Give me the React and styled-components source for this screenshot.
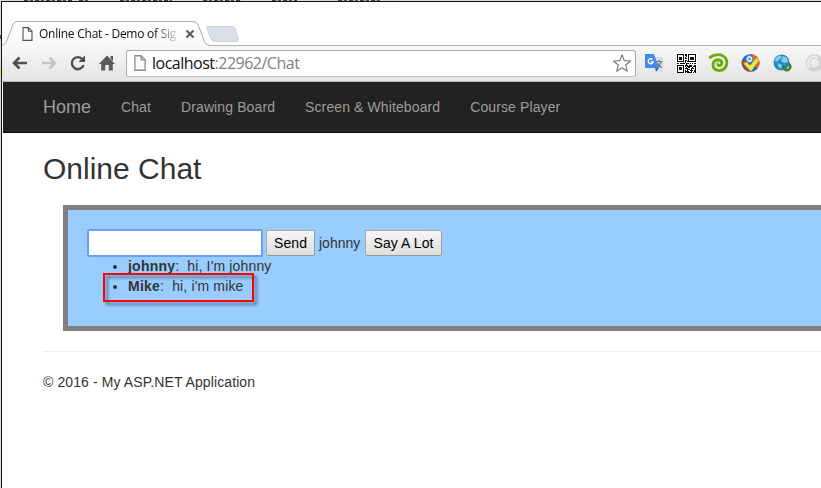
import React from "react";
import styled, { createGlobalStyle } from "styled-components";

const Global = createGlobalStyle`
  * { box-sizing: border-box; }
  html, body { margin: 0; overflow: hidden; background: #dcdddd; }
  body { font: 14px/20px "Liberation Sans", Arial, sans-serif; color: #333; }
`;

const dashes = "repeating-linear-gradient(90deg, #444 0 4px, #bbb 4px 6px, #555 6px 9px, #ddd 9px 11px)";

const Desktop = styled.div`
  width: 821px;
  height: 488px;
  padding: 1px 0 0 1px;
  overflow: hidden;
  background:
    ${dashes} 24px 0 / 48px 1px no-repeat,
    ${dashes} 79px 0 / 10px 1px no-repeat,
    ${dashes} 120px 0 / 52px 1px no-repeat,
    ${dashes} 203px 0 / 38px 1px no-repeat,
    ${dashes} 272px 0 / 25px 1px no-repeat,
    ${dashes} 338px 0 / 44px 1px no-repeat,
    linear-gradient(#e0cfcf, #e0cfcf) 316px 0 / 90px 1px no-repeat,
    linear-gradient(#555, #555) 0 35px / 1px 4px no-repeat,
    linear-gradient(#f0e600, #f0e600) 0 70px / 1px 4px no-repeat,
    #d9dcdc;
`;
const Window = styled.div`
  width: 840px;
  height: 487px;
  border: 1px solid #111;
  border-bottom: 0;
  background: #fff;
`;
const TabStrip = styled.div`
  position: relative;
  height: 44px;
  background: #fff;
`;
const TabShape = styled.svg`
  position: absolute;
  left: 0;
  top: 0;
`;
const TabContent = styled.div`
  position: absolute;
  left: 20px;
  top: 24px;
  display: flex;
  align-items: center;
  height: 16px;
`;
const TabTitle = styled.span`
  width: 139px;
  margin-left: 6px;
  margin-right: 5px;
  white-space: nowrap;
  font: 12px/16px "Open Sans", "Noto Sans", sans-serif;
  letter-spacing: -0.25px;
  color: #111;
  mask-image: linear-gradient(90deg, #000 115px, transparent 141px);
`;
const Toolbar = styled.div`
  display: flex;
  align-items: center;
  height: 36px;
  padding: 0 0 1px 9px;
  background: linear-gradient(#f7f7f7, #e4e4e4);
  border-bottom: 1px solid #b5b5b5;
`;
const NavIcons = styled.div`
  display: flex;
  gap: 11px;
  width: 115px;
  svg { display: block; flex: none; }
`;
const Omnibox = styled.div`
  display: flex;
  align-items: center;
  width: 510px;
  height: 27px;
  padding: 0 3px 0 7px;
  border: 1px solid #a9a9a9;
  border-bottom-color: #c4c4c4;
  border-radius: 3px;
  background: #fff;
`;
const Url = styled.span`
  flex: 1;
  margin-left: 6px;
  font: 16px/24px "Open Sans", "Noto Sans", sans-serif;
  letter-spacing: -0.5px;
  color: #808080;
  b { font-weight: 400; color: #111; }
`;
const Extensions = styled.div`
  display: flex;
  gap: 12px;
  margin-left: 8px;
  svg { display: block; flex: none; }
`;
const Page = styled.div`
  margin-left: 1px;
`;
const Navbar = styled.nav`
  display: flex;
  align-items: center;
  height: 51px;
  padding-left: 40px;
  background: #222;
  border-bottom: 1px solid #080808;
  color: #9d9d9d;
`;
const Brand = styled.a`
  width: 63px;
  font-size: 18px;
`;
const NavLink = styled.a`
  padding: 0 15px;
  letter-spacing: 0.11px;
`;
const Container = styled.main`
  padding-left: 40px;
`;
const Title = styled.h2`
  margin: 19px 0 20px;
  font: 30px/33px "Liberation Sans", Arial, sans-serif;
`;
const ChatBox = styled.section`
  margin: 0 0 20px 20px;
  height: 126px;
  padding: 20px;
  border: 5px solid #808080;
  background: #99ccff;
`;
const Form = styled.div`
  display: flex;
  align-items: center;
  gap: 4px;
  height: 26px;
`;
const MessageInput = styled.input`
  width: 174px;
  height: 26px;
  padding: 1px 2px;
  border: 1px solid #5b93ee;
  outline: 2px solid #699ff5;
  outline-offset: -1px;
  border-radius: 1px;
  background: #fff;
`;
const Button = styled.button`
  width: ${(p) => p.$width}px;
  height: 26px;
  padding: 0;
  border: 1px solid #a8a8a8;
  border-color: #a9a9a9 #999 #969696 #a9a9a9;
  border-radius: 2px;
  background: linear-gradient(#f6f6f6, #dedede);
  font: 14px/20px "Liberation Sans", Arial, sans-serif;
  letter-spacing: 0.1px;
  color: #000;
`;
const UserName = styled.span`
  width: 42px;
`;
const Messages = styled.ul`
  margin: 0;
  padding-left: 40px;
`;
const Message = styled.li`
  position: relative;
  white-space: pre;
  letter-spacing: 0.15px;
  strong { letter-spacing: 0.22px; }
`;
const Highlight = styled.span`
  position: absolute;
  left: -25px;
  top: -3px;
  width: 151px;
  height: 29px;
  border: 2px solid #f00;
  filter: drop-shadow(3px 3px 1.5px rgba(0, 0, 0, 0.45));
`;
const Footer = styled.footer`
  padding-top: 20px;
  border-top: 1px solid #eee;
  letter-spacing: 0.1px;
`;

const DocIcon = ({ w, h, color }) => (
  <svg width={w} height={h} viewBox="0 0 11 15">
    <path d="M.7 .7H6.500L10.300 4.500V14.300H.7ZM6.500 .7V4.500H10.300" fill="#fafafa" stroke={color} strokeWidth="1.200" />
  </svg>
);

const Arrow = ({ color, flip }) => (
  <svg width="18" height="18" viewBox="0 0 18 18">
    <path
      d="M16 9H3.500M8.500 3.500L3 9l5.500 5.500"
      fill="none"
      stroke={color}
      strokeWidth="2.600"
      transform={flip ? "translate(18 0) scale(-1 1)" : undefined}
    />
  </svg>
);

const QR = [
  "1111111011011111111",
  "1000001011010000001",
  "1000001001010000001",
  "1011101010010111101",
  "1011101011010111101",
  "1011101000010111101",
  "1000001011010000001",
  "1111111010111111111",
  "0000000010000000000",
  "1101111101110101011",
  "0000000001000000000",
  "1111111011101110011",
  "1000001010111110111",
  "1011101001011001001",
  "1011101011100011101",
  "1011101000111010001",
  "1000001010100111011",
  "1000001011110010011",
  "1111111010111110101",
];

export default function App() {
  return (
    <Desktop>
      <Global />
      <Window>
        <TabStrip>
          <TabShape width="819" height="44">
            <defs>
              <linearGradient id="tab" x1="0" y1="0" x2="0" y2="1">
                <stop offset="0" stopColor="#fff" />
                <stop offset="1" stopColor="#f7f7f7" />
              </linearGradient>
            </defs>
            <path d="M0 43.5H819" stroke="#b0b0b0" />
            <path d="M206 24.5h24q2.500 0 3.300 2l3 10.500q.7 2.500-2 2.500h-21q-3 0-4.300-2.500l-4-10q-.8-2.500 1-2.500z" fill="#d9dfe7" stroke="#ced3d9" />
            <path d="M-1 43.500Q3 43 4.500 39.500L11 22.500Q12.300 19.500 15 19.500H191Q194.500 19.500 196 22.500L202.500 39.500Q204 43.500 208 43.500V46H-1Z" fill="url(#tab)" stroke="#aaa" />
          </TabShape>
          <TabContent>
            <DocIcon w={11} h={14} color="#555" />
            <TabTitle>Online Chat - Demo of Sig</TabTitle>
            <svg width="14" height="14" viewBox="0 0 14 14">
              <path d="M3.500 3.500l7 7m0-7l-7 7" stroke="#555" strokeWidth="1.900" />
            </svg>
          </TabContent>
        </TabStrip>
        <Toolbar>
          <NavIcons>
            <Arrow color="#505050" />
            <Arrow color="#c4c4c4" flip />
            <svg width="18" height="18" viewBox="0 0 18 18">
              <path d="M13.500 5.300A6 6 0 1 0 14.600 11" fill="none" stroke="#505050" strokeWidth="2.400" />
              <path d="M16 1.500V8H9.500z" fill="#505050" />
            </svg>
            <svg width="18" height="18" viewBox="0 0 18 18">
              <path d="M9 1.500L17 10h-2.200v6.500h-4V11H7.200v5.500h-4V10H1zM12.500 2H15v5l-2.500-2.500z" fill="#5a5a5a" />
            </svg>
          </NavIcons>
          <Omnibox>
            <DocIcon w={12} h={16} color="#8a8a8a" />
            <Url><b>localhost</b>:22962/Chat</Url>
            <svg width="20" height="20" viewBox="0 0 20 20">
              <path d="M10 1.700l2.300 5.900 6.200.4-4.800 4 1.600 6.200L10 14.800l-5.300 3.400L6.300 12 1.500 8l6.200-.4z" fill="#fff" stroke="#777" strokeWidth="1.100" strokeLinejoin="round" />
            </svg>
          </Omnibox>
          <Extensions>
            <svg width="20" height="20" viewBox="0 0 20 20">
              <path d="M8 4h11v15h-6z" fill="#dcdcdc" />
              <path d="M1 1h9l5 14H2q-1 0-1-1z" fill="#4688f1" />
              <path d="M11 15h4l-3 4z" fill="#3b5fc0" />
              <path d="M8.500 6.500a2.500 2.500 0 1 0 .6 2.500H6.700" fill="none" stroke="#fff" strokeWidth="1.300" />
              <path d="M12.500 8.500H18M15 7v1.500M17 9q-1 4-3.500 5.500M13.500 10q1 3 4.500 4.500" fill="none" stroke="#607d8b" strokeWidth="1.200" />
            </svg>
            <svg width="21" height="20" viewBox="0 0 21 20" shapeRendering="crispEdges">
              <path fill="#fff" d="M0 0h21v20H0z" />
              {QR.map((row, y) => [...row].map((v, x) => v === "1" && <rect key={`${x}-${y}`} x={x + 1} y={y + 1} width="1" height="1" fill="#000" />))}
            </svg>
            <svg width="20" height="20" viewBox="0 0 20 20">
              <path d="M0 5Q6 .5 12 2Q18.500 4.500 17.700 11Q16.500 17.500 10 17.500Q4 17 4 11.500Q4.500 7 9 6.800Q13 7.200 12.800 10.500Q12 13 9.300 12.300Q8.200 11.300 9.200 10.300" fill="none" stroke="#6cab0c" strokeWidth="2.900" />
            </svg>
            <svg width="20" height="20" viewBox="0 0 20 20">
              <circle cx="9.500" cy="10" r="9" fill="#2f67b5" />
              <path d="M11 1.200A9 9 0 0 1 16.500 15.500L10 9z" fill="#e8651d" />
              <path d="M.7 8Q1.500 15 8 18.800l3-4L6 8z" fill="#c53a21" />
              <circle cx="8.500" cy="6" r="3.500" fill="#dceaff" stroke="#4e80c7" />
              <circle cx="8.500" cy="6" r="1.200" fill="#4e80c7" />
              <path d="M2.500 10.500l3-1.500 3.500 3.500L15.500 5 18 7 10 18.500z" fill="#e4ed4f" stroke="#a5af2f" strokeWidth=".6" />
            </svg>
            <svg width="20" height="20" viewBox="0 0 20 20">
              <circle cx="8.500" cy="9.500" r="8" fill="#278cc5" />
              <path d="M2 7q1-4 5-4.500l2 1.500-3 3-3 2zM10 3l4 2 1 4-4 1-3-2zM5 10l4 2-1 4-3-3z" fill="#83cdec" />
              <path d="M15.500 10.500q4 4-.5 6.500-4 1-4.500-3l3 .5" fill="none" stroke="#39843b" strokeWidth="2.600" />
            </svg>
            <svg width="20" height="20" viewBox="0 0 20 20">
              <circle cx="9.500" cy="10" r="6.500" fill="none" stroke="#d3d3d3" strokeWidth="4.500" />
              <path d="M5 15Q1 9 5.500 5q4-3 7 0" fill="none" stroke="#eee" strokeWidth="2" />
            </svg>
          </Extensions>
        </Toolbar>
        <Page>
          <Navbar>
            <Brand>Home</Brand>
            <NavLink>Chat</NavLink>
            <NavLink>Drawing Board</NavLink>
            <NavLink>Screen &amp; Whiteboard</NavLink>
            <NavLink>Course Player</NavLink>
          </Navbar>
          <Container>
            <Title>Online Chat</Title>
            <ChatBox>
              <Form>
                <MessageInput />
                <Button $width={49}>Send</Button>
                <UserName>johnny</UserName>
                <Button $width={77}>Say A Lot</Button>
              </Form>
              <Messages>
                <Message><strong>johnny</strong>:&nbsp; hi, I'm johnny</Message>
                <Message><strong>Mike</strong>:&nbsp; hi, i'm mike<Highlight /></Message>
              </Messages>
            </ChatBox>
            <Footer>© 2016 - My ASP.NET Application</Footer>
          </Container>
        </Page>
      </Window>
    </Desktop>
  );
}
